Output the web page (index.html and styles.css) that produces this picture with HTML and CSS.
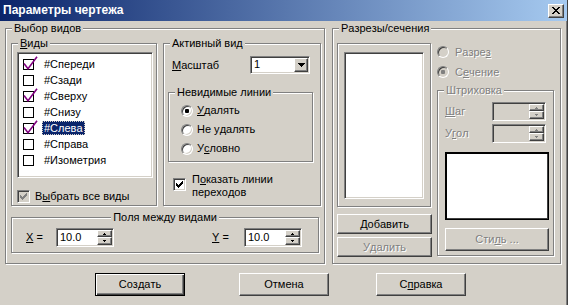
FILE: index.html
```html
<!DOCTYPE html>
<html lang="ru">
<head>
    <meta charset="UTF-8">
    <title>Параметры чертежа</title>
    <link rel="stylesheet" href="styles.css">
</head>
<body>
    <svg class="defs" width="0" height="0">
        <symbol id="lbox" viewBox="0 0 15 14">
            <rect x="0.5" y="3.5" width="10" height="10" fill="#fff" stroke="#000"/>
        </symbol>
        <symbol id="lcheck" viewBox="0 0 15 14">
            <rect x="0.5" y="3.5" width="10" height="10" fill="#fff" stroke="#000"/>
            <path d="M1 7.5l4 5.2 9-12" fill="none" stroke="#800080" stroke-width="1.6"/>
        </symbol>
        <symbol id="tick" viewBox="0 0 13 13">
            <path d="M3 5h1v3H3zM4 6h1v3H4zM5 7h1v3H5zM6 6h1v3H6zM7 5h1v3H7zM8 4h1v3H8zM9 3h1v3H9z"/>
        </symbol>
    </svg>

    <div class="window">
        <div class="titlebar">
            <span class="title">Параметры чертежа</span>
            <span class="close raised">
                <svg width="8" height="7" viewBox="0 0 8 7"><path d="M0 0h2v1H0zM6 0h2v1H6zM1 1h2v1H1zM5 1h2v1H5zM2 2h4v1H2zM3 3h2v1H3zM2 4h4v1H2zM1 5h2v1H1zM5 5h2v1H5zM0 6h2v1H0zM6 6h2v1H6z"/></svg>
            </span>
        </div>

        <div class="client">
            <div class="panels">
                <!-- left: view selection -->
                <div class="group sel">
                    <div class="legend">Выбор видов</div>
                    <div class="sel-top">
                        <div class="group views">
                            <div class="legend"><u>В</u>иды</div>
                            <div class="listbox views-list">
                                <div class="item"><svg class="lc"><use href="#lcheck"/></svg><span class="item-text">#Спереди</span></div>
                                <div class="item"><svg class="lc"><use href="#lbox"/></svg><span class="item-text">#Сзади</span></div>
                                <div class="item"><svg class="lc"><use href="#lcheck"/></svg><span class="item-text">#Сверху</span></div>
                                <div class="item"><svg class="lc"><use href="#lbox"/></svg><span class="item-text">#Снизу</span></div>
                                <div class="item"><svg class="lc"><use href="#lcheck"/></svg><span class="item-text current">#Слева</span></div>
                                <div class="item"><svg class="lc"><use href="#lbox"/></svg><span class="item-text">#Справа</span></div>
                                <div class="item"><svg class="lc"><use href="#lbox"/></svg><span class="item-text">#Изометрия</span></div>
                            </div>
                            <div class="check-row all">
                                <span class="cb cb-dis"><svg class="tick"><use href="#tick"/></svg></span>
                                <span class="cb-text">В<u>ы</u>брать все виды</span>
                            </div>
                        </div>

                        <div class="group active">
                            <div class="legend">Активный вид</div>
                            <div class="scale-row">
                                <span class="scale-label"><u>М</u>асштаб</span>
                                <div class="combo sunken">
                                    <span class="combo-val">1</span>
                                    <span class="combo-btn raised">
                                        <svg width="7" height="4" viewBox="0 0 7 4"><path d="M0 0h7v1H0zM1 1h5v1H1zM2 2h3v1H2zM3 3h1v1H3z"/></svg>
                                    </span>
                                </div>
                            </div>
                            <div class="group hidden-lines">
                                <div class="legend">Невидимые линии</div>
                                <div class="radio-row first"><span class="radio on"></span><span class="radio-text"><u>У</u>далять</span></div>
                                <div class="radio-row"><span class="radio"></span><span class="radio-text">Не у<u>д</u>алять</span></div>
                                <div class="radio-row"><span class="radio"></span><span class="radio-text">У<u>с</u>ловно</span></div>
                            </div>
                            <div class="check-row trans">
                                <span class="cb"><svg class="tick"><use href="#tick"/></svg></span>
                                <span class="trans-text">
                                    <span class="line">П<u>о</u>казать линии</span>
                                    <span class="line">переходов</span>
                                </span>
                            </div>
                        </div>
                    </div>

                    <div class="group fields">
                        <div class="legend center">Поля между видами</div>
                        <div class="fields-row">
                            <span class="f-label"><u>X</u> =</span>
                            <div class="spin sunken">
                                <span class="spin-val">10.0</span>
                                <span class="spin-btns">
                                    <span class="spin-up raised"><svg width="3" height="2" viewBox="0 0 3 2"><path d="M1 0h1v1H1zM0 1h3v1H0z"/></svg></span>
                                    <span class="spin-dn raised"><svg width="3" height="2" viewBox="0 0 3 2"><path d="M0 0h3v1H0zM1 1h1v1H1z"/></svg></span>
                                </span>
                            </div>
                            <span class="f-label y"><u>Y</u> =</span>
                            <div class="spin sunken">
                                <span class="spin-val">10.0</span>
                                <span class="spin-btns">
                                    <span class="spin-up raised"><svg width="3" height="2" viewBox="0 0 3 2"><path d="M1 0h1v1H1zM0 1h3v1H0z"/></svg></span>
                                    <span class="spin-dn raised"><svg width="3" height="2" viewBox="0 0 3 2"><path d="M0 0h3v1H0zM1 1h1v1H1z"/></svg></span>
                                </span>
                            </div>
                        </div>
                    </div>
                </div>

                <!-- right: sections -->
                <div class="group sect">
                    <div class="legend">Разрезы/сечения</div>
                    <div class="sect-body">
                        <div class="sect-left">
                            <div class="group list-frame">
                                <div class="listbox sect-list"></div>
                            </div>
                            <div class="btn raised side-btn"><u>Д</u>обавить</div>
                            <div class="btn raised side-btn second dis">У<u>д</u>алить</div>
                        </div>
                        <div class="sect-right">
                            <div class="radio-row first dis"><span class="radio radio-dis"></span><span class="radio-text">Разре<u>з</u></span></div>
                            <div class="radio-row dis"><span class="radio radio-dis on"></span><span class="radio-text">С<u>е</u>чение</span></div>
                            <div class="group hatch">
                                <div class="legend dis">Штриховка</div>
                                <div class="hatch-row first">
                                    <span class="h-label dis"><u>Ш</u>аг</span>
                                    <div class="spin sunken spin-dis">
                                        <span class="spin-val"></span>
                                        <span class="spin-btns">
                                            <span class="spin-up raised"><svg width="3" height="2" viewBox="0 0 3 2"><path d="M1 0h1v1H1zM0 1h3v1H0z"/></svg></span>
                                            <span class="spin-dn raised"><svg width="3" height="2" viewBox="0 0 3 2"><path d="M0 0h3v1H0zM1 1h1v1H1z"/></svg></span>
                                        </span>
                                    </div>
                                </div>
                                <div class="hatch-row">
                                    <span class="h-label dis">У<u>г</u>ол</span>
                                    <div class="spin sunken spin-dis">
                                        <span class="spin-val"></span>
                                        <span class="spin-btns">
                                            <span class="spin-up raised"><svg width="3" height="2" viewBox="0 0 3 2"><path d="M1 0h1v1H1zM0 1h3v1H0z"/></svg></span>
                                            <span class="spin-dn raised"><svg width="3" height="2" viewBox="0 0 3 2"><path d="M0 0h3v1H0zM1 1h1v1H1z"/></svg></span>
                                        </span>
                                    </div>
                                </div>
                                <div class="hatch-preview"></div>
                                <div class="btn raised style-btn dis">Сти<u>л</u>ь ...</div>
                            </div>
                        </div>
                    </div>
                </div>
            </div>

            <div class="buttons">
                <div class="btn raised dlg-btn default">Создать</div>
                <div class="btn raised dlg-btn cancel">Отмена</div>
                <div class="btn raised dlg-btn help">С<u>п</u>равка</div>
            </div>
        </div>
    </div>
</body>
</html>
```

FILE: styles.css
```css
* {
    box-sizing: border-box;
}

body {
    margin: 0;
    background: #fff;
    font-family: "Liberation Sans", Arial, sans-serif;
    font-size: 11px;
    line-height: 13px;
    font-kerning: none;
    color: #000;
}

.defs {
    display: block;
    width: 0;
    height: 0;
    overflow: hidden;
}

u {
    text-decoration: underline;
    text-underline-offset: 1px;
}

/* window frame */
.window {
    width: 568px;
    height: 305px;
    background: #d4d0c8;
    border-right: 1px solid #404040;
    box-shadow: inset -1px 0 #808080;
}

.titlebar {
    display: flex;
    align-items: center;
    height: 21px;
    padding-left: 3px;
    background: linear-gradient(to right, #0a246a, #a6caf0);
}

.title {
    color: #fff;
    font-weight: bold;
    font-size: 12px;
}

.close {
    display: flex;
    align-items: center;
    justify-content: center;
    width: 16px;
    height: 14px;
    margin-left: auto;
    margin-right: 3px;
    background: #d4d0c8;
}

/* 3d edges */
.raised {
    border: 1px solid;
    border-color: #fff #404040 #404040 #fff;
    box-shadow: inset -1px -1px #808080;
    background: #d4d0c8;
}

.sunken {
    border: 1px solid;
    border-color: #808080 #fff #fff #808080;
    box-shadow: inset 1px 1px #404040, inset -1px -1px #d4d0c8;
    background: #fff;
}

.group {
    border: 1px solid #808080;
    box-shadow: inset 1px 1px #fff, 1px 1px #fff;
}

.legend {
    width: fit-content;
    height: 13px;
    margin: -7px 0 0 6px;
    padding: 0 2px;
    background: #d4d0c8;
    white-space: nowrap;
}

.legend.center {
    margin-left: auto;
    margin-right: auto;
}

.dis {
    color: #808080;
    text-shadow: 1px 1px 0 #fff;
}

.client {
    padding: 7px 0 0 5px;
}

.panels {
    display: flex;
    gap: 7px;
}

/* left group */
.sel {
    width: 320px;
    height: 236px;
}

.sel-top {
    display: flex;
    gap: 6px;
    margin: 8px 0 0 5px;
}

.views {
    width: 146px;
    height: 163px;
}

.listbox {
    border: 1px solid;
    border-color: #808080 #fff #fff #808080;
    box-shadow: inset 1px 1px #404040, inset -1px -1px #d4d0c8;
    background: #fff;
}

.views-list {
    width: 136px;
    height: 126px;
    margin: 2px 0 0 5px;
    padding: 3px 0 0 5px;
}

.item {
    display: flex;
    height: 16px;
}

.lc {
    display: block;
    flex: none;
    width: 15px;
    height: 14px;
}

.item-text {
    height: 14px;
    margin: 1px 0 0 4px;
    padding: 0 2px;
    line-height: 14px;
}

.item-text.current {
    background: #0a246a;
    color: #fff;
    outline: 1px dotted #d4d0c8;
    outline-offset: -1px;
}

.check-row {
    display: flex;
}

.cb {
    display: block;
    flex: none;
    width: 13px;
    height: 13px;
    border: 1px solid;
    border-color: #808080 #fff #fff #808080;
    box-shadow: inset 1px 1px #404040, inset -1px -1px #d4d0c8;
    background: #fff;
}

.cb-dis {
    background: #d4d0c8;
    fill: #808080;
}

.tick {
    display: block;
    width: 13px;
    height: 13px;
    margin: -1px 0 0 -1px;
}

.all {
    align-items: center;
    height: 13px;
    margin: 12px 0 0 5px;
}

.cb-text {
    margin-left: 5px;
}

.active {
    width: 158px;
    height: 163px;
}

.scale-row {
    display: flex;
    align-items: center;
    height: 18px;
    margin: 6px 0 0 8px;
}

.scale-label {
    width: 78px;
}

.combo {
    display: flex;
    width: 60px;
    height: 18px;
}

.combo-val {
    flex: 1;
    padding-left: 3px;
    line-height: 15px;
}

.combo-btn {
    display: flex;
    align-items: center;
    justify-content: center;
    width: 14px;
    margin: 1px;
}

.hidden-lines {
    width: 145px;
    height: 70px;
    margin: 18px 0 0 4px;
}

.radio-row {
    display: flex;
    align-items: center;
    height: 19px;
    margin-left: 12px;
}

.radio-row.first {
    margin-top: 2px;
}

.radio {
    display: flex;
    align-items: center;
    justify-content: center;
    width: 12px;
    height: 12px;
    border-radius: 50%;
    border: 1px solid;
    border-color: #808080 #fff #fff #808080;
    box-shadow: inset 1px 1px #404040, inset -1px -1px #d4d0c8;
    background: #fff;
}

.radio.on::after {
    content: "";
    width: 4px;
    height: 4px;
    border-radius: 1px;
    background: #000;
}

.radio-dis {
    background: #d4d0c8;
}

.radio-dis.on::after {
    background: #808080;
}

.radio-text {
    margin-left: 4px;
}

.trans {
    margin: 11px 0 0 9px;
    line-height: 13px;
}

.trans .cb {
    margin-top: 5px;
}

.trans-text {
    margin-left: 6px;
}

.trans-text .line {
    display: block;
    white-space: nowrap;
}

.fields {
    width: 308px;
    height: 36px;
    margin: 11px 0 0 5px;
}

.fields-row {
    display: flex;
    align-items: center;
    height: 19px;
    margin: 4px 0 0 14px;
}

.f-label {
    width: 30px;
}

.f-label.y {
    width: 32px;
    margin-left: 98px;
}

/* spin edit */
.spin {
    display: flex;
    width: 58px;
    height: 19px;
}

.spin-val {
    flex: 1;
    padding-left: 3px;
    line-height: 16px;
}

.spin-btns {
    display: flex;
    flex-direction: column;
    width: 15px;
    margin: 1px;
}

.spin-up,
.spin-dn {
    display: flex;
    align-items: center;
    justify-content: center;
    height: 7px;
}

.spin-dn {
    height: 8px;
}

.spin svg {
    display: block;
}

.spin-dis {
    background: #d4d0c8;
    fill: #808080;
}

/* right group */
.sect {
    width: 229px;
    height: 236px;
}

.sect-body {
    display: flex;
    gap: 5px;
    margin: 8px 0 0 4px;
}

.sect-left {
    width: 95px;
}

.list-frame {
    width: 94px;
    height: 164px;
    padding: 8px 0 0 6px;
}

.sect-list {
    width: 80px;
    height: 147px;
}

.btn {
    display: flex;
    align-items: center;
    justify-content: center;
}

.side-btn {
    height: 20px;
    margin-top: 7px;
}

.side-btn.second {
    margin-top: 3px;
}

.sect-right {
    width: 118px;
}

.sect-right > .radio-row {
    height: 20px;
    margin-left: 0;
}

.sect-right > .radio-row.first {
    margin-top: -1px;
}

.sect-right .radio-text {
    margin-left: 6px;
}

.hatch {
    width: 117px;
    height: 166px;
    margin-top: 8px;
}

.hatch-row {
    display: flex;
    align-items: center;
    height: 19px;
    margin: 3px 0 0 7px;
}

.hatch-row.first {
    margin-top: 5px;
}

.h-label {
    width: 47px;
}

.hatch-row .spin {
    width: 54px;
}

.hatch-preview {
    width: 104px;
    height: 68px;
    margin: 9px 0 0 7px;
    background: #fff;
    border: 1px solid #000;
    box-shadow: inset 1px 1px #000, inset -1px -1px #404040;
}

.style-btn {
    width: 104px;
    height: 23px;
    margin: 8px 0 0 7px;
}

/* dialog buttons */
.buttons {
    display: flex;
    margin-top: 9px;
}

.dlg-btn {
    width: 90px;
    height: 23px;
}

.default {
    margin-left: 90px;
    border-color: #000;
    box-shadow: inset 1px 1px #fff, inset -1px -1px #404040, inset -2px -2px #808080;
}

.cancel {
    margin-left: 54px;
}

.help {
    margin-left: 47px;
}
```
